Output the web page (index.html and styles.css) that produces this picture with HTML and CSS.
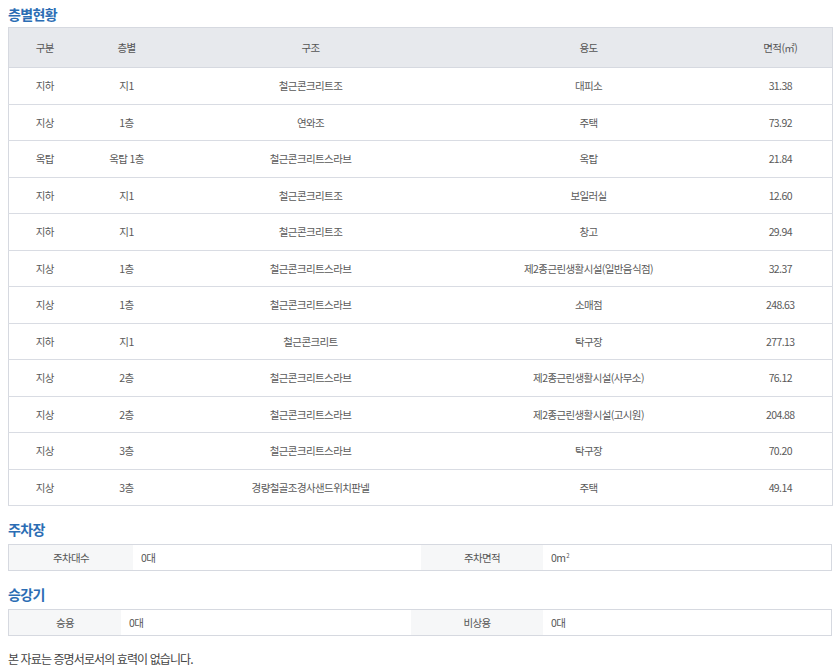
FILE: index.html
```html
<!DOCTYPE html>
<html lang="ko">
<head>
<meta charset="utf-8">
<title>층별현황</title>
<link rel="stylesheet" href="styles.css">
</head>
<body>
<h2 class="sec-title first">층별현황</h2>
<table class="floor-table">
  <colgroup>
    <col class="c1"><col class="c2"><col class="c3"><col class="c4"><col class="c5">
  </colgroup>
  <thead>
    <tr><th>구분</th><th>층별</th><th>구조</th><th>용도</th><th>면적(㎡)</th></tr>
  </thead>
  <tbody>
    <tr><td>지하</td><td>지1</td><td>철근콘크리트조</td><td>대피소</td><td>31.38</td></tr>
    <tr><td>지상</td><td>1층</td><td>연와조</td><td>주택</td><td>73.92</td></tr>
    <tr><td>옥탑</td><td>옥탑 1층</td><td>철근콘크리트스라브</td><td>옥탑</td><td>21.84</td></tr>
    <tr><td>지하</td><td>지1</td><td>철근콘크리트조</td><td>보일러실</td><td>12.60</td></tr>
    <tr><td>지하</td><td>지1</td><td>철근콘크리트조</td><td>창고</td><td>29.94</td></tr>
    <tr><td>지상</td><td>1층</td><td>철근콘크리트스라브</td><td>제2종근린생활시설(일반음식점)</td><td>32.37</td></tr>
    <tr><td>지상</td><td>1층</td><td>철근콘크리트스라브</td><td>소매점</td><td>248.63</td></tr>
    <tr><td>지하</td><td>지1</td><td>철근콘크리트</td><td>탁구장</td><td>277.13</td></tr>
    <tr><td>지상</td><td>2층</td><td>철근콘크리트스라브</td><td>제2종근린생활시설(사무소)</td><td>76.12</td></tr>
    <tr><td>지상</td><td>2층</td><td>철근콘크리트스라브</td><td>제2종근린생활시설(고시원)</td><td>204.88</td></tr>
    <tr><td>지상</td><td>3층</td><td>철근콘크리트스라브</td><td>탁구장</td><td>70.20</td></tr>
    <tr><td>지상</td><td>3층</td><td>경량철골조경사샌드위치판넬</td><td>주택</td><td>49.14</td></tr>
  </tbody>
</table>

<h2 class="sec-title">주차장</h2>
<div class="info-box parking">
  <div class="lbl">주차대수</div><div class="val">0대</div>
  <div class="lbl">주차면적</div><div class="val">0m<span class="sup">2</span></div>
</div>

<h2 class="sec-title">승강기</h2>
<div class="info-box elevator">
  <div class="lbl">승용</div><div class="val">0대</div>
  <div class="lbl">비상용</div><div class="val">0대</div>
</div>

<p class="note">본 자료는 증명서로서의 효력이 없습니다.</p>
</body>
</html>
```
FILE: styles.css
```css
html, body {
  margin: 0;
  padding: 0;
  background: #ffffff;
}
body {
  padding: 0 8px 0 8px;
  font-family: "Noto Sans CJK KR", "Noto Sans", sans-serif;
  color: #555555;
  font-size: 11px;
}
.sec-title {
  margin: 13px 0 5px 0;
  font-size: 14px;
  line-height: 20px;
  font-weight: 700;
  color: #2b6db4;
  letter-spacing: -0.6px;
}
.sec-title.first {
  margin-top: 4px;
  margin-bottom: 3px;
}
.floor-table {
  width: 824px;
  border-collapse: collapse;
  table-layout: fixed;
  border: 1px solid #d6d9e0;
  font-size: 10.5px;
  letter-spacing: -0.6px;
}
.c1 { width: 72px; }
.c2 { width: 92px; }
.c3 { width: 276px; }
.c4 { width: 280px; }
.c5 { width: 104px; }
.floor-table th,
.floor-table td {
  text-align: center;
  padding: 0;
  font-weight: 400;
}
.floor-table thead tr {
  height: 40px;
  background: #e7e9ed;
}
.floor-table th {
  color: #555555;
  border-bottom: 1px solid #d6d9e0;
}
.floor-table tbody tr {
  height: 36.5px;
}
.floor-table tbody td {
  border-bottom: 1px solid #d9dce3;
  color: #5a5a5a;
}
.info-box {
  display: grid;
  border: 1px solid #d6d9e0;
  height: 25px;
  font-size: 10.5px;
  letter-spacing: -0.6px;
}
.parking {
  grid-template-columns: 124px 288px 122px 1fr;
}
.elevator {
  grid-template-columns: 112px 290px 132px 1fr;
}
.info-box .lbl {
  background: #f6f7f8;
  display: flex;
  align-items: center;
  justify-content: center;
  color: #555555;
}
.info-box .val {
  display: flex;
  align-items: center;
  padding-left: 8px;
  color: #555555;
}
.sup {
  font-size: 6px;
  align-self: flex-start;
  margin-top: 6px;
  margin-left: 1px;
}
.note {
  margin: 15px 0 0 0;
  font-size: 12px;
  line-height: 16px;
  color: #444444;
  letter-spacing: -0.9px;
}
```
